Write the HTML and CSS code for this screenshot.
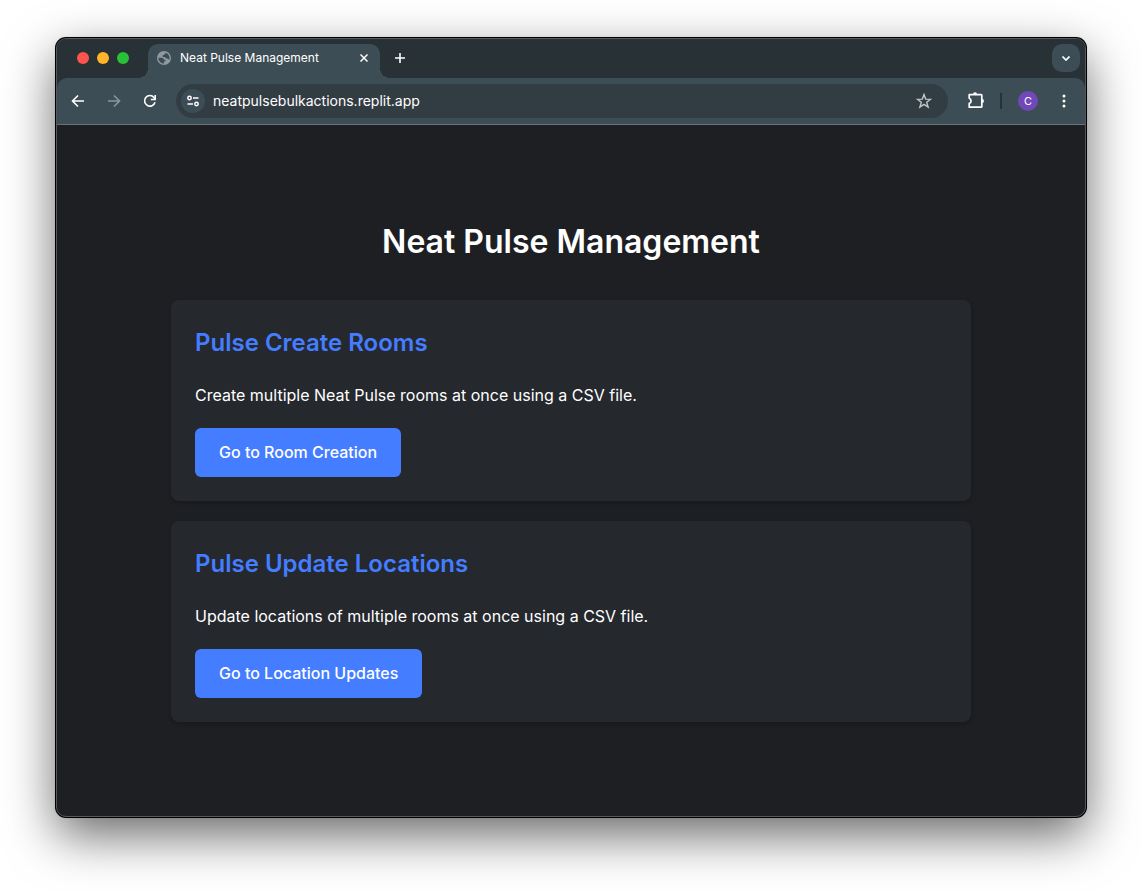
FILE: index.html
```html
<!DOCTYPE html>
<html lang="en">
<head>
<meta charset="utf-8">
<meta name="viewport" content="width=device-width, initial-scale=1">
<title>Neat Pulse Management</title>
<link rel="stylesheet" href="styles.css">
</head>
<body>
<div class="window">
  <header class="chrome">
    <div class="tab-strip">
      <div class="lights">
        <button class="light light-close" type="button" aria-label="Close window"></button>
        <button class="light light-min" type="button" aria-label="Minimize window"></button>
        <button class="light light-max" type="button" aria-label="Zoom window"></button>
      </div>
      <div class="tab">
        <svg class="globe" viewBox="0 0 14 14" width="14" height="14" aria-hidden="true"><circle cx="7" cy="7" r="7" fill="#9298a0"/><path d="M8.600 1.700C11 2.300 12.600 4.400 12.600 7c0 .6-.1 1.100-.3 1.600-.9-.2-1.100-1.200-2-1.200H9.200c-.7 0-.8-1.400-1.500-1.400H5.600V4.800c0-.5.5-.7 1-.7.600 0 .6-1.200 1.200-1.200.6 0 .8-.5.8-1.200z" fill="#3d4d55"/><path d="M1.500 6.800h3.200c1.300 0 2.200.8 2.200 2h1.500v1.700H6.900v2.100C3.800 12.500 1.300 9.900 1.500 6.800z" fill="#3d4d55"/></svg>
        <span class="tab-title">Neat Pulse Management</span>
        <button class="icon-button tab-close" type="button" aria-label="Close tab">
          <svg viewBox="0 0 8 8" width="8" height="8"><path d="M.5.5l7 7m0-7l-7 7" stroke="currentColor" stroke-width="1.500"/></svg>
        </button>
      </div>
      <button class="icon-button new-tab" type="button" aria-label="New tab">
        <svg viewBox="0 0 10 10" width="10" height="10"><path d="M5 0v10M0 5h10" stroke="currentColor" stroke-width="1.600"/></svg>
      </button>
      <button class="icon-button tab-search" type="button" aria-label="Search tabs">
        <svg viewBox="0 0 8 5" width="8" height="5"><path d="M.5.500L4 4 7.500.500" fill="none" stroke="currentColor" stroke-width="1.700"/></svg>
      </button>
    </div>
    <div class="toolbar">
      <nav class="history">
        <button class="icon-button" type="button" aria-label="Back">
          <svg viewBox="0 0 16 16" width="16" height="16"><path d="M14 8H3M8 2.500L2.500 8 8 13.500" fill="none" stroke="currentColor" stroke-width="1.600"/></svg>
        </button>
        <button class="icon-button forward" type="button" aria-label="Forward">
          <svg viewBox="0 0 16 16" width="16" height="16"><path d="M2 8h11M8 2.500L13.500 8 8 13.500" fill="none" stroke="currentColor" stroke-width="1.600"/></svg>
        </button>
        <button class="icon-button" type="button" aria-label="Reload">
          <svg viewBox="0 0 16 16" width="16" height="16"><path d="M13 9.200A5.300 5.300 0 1 1 12 4.500L13 6" fill="none" stroke="currentColor" stroke-width="1.600"/><path d="M13.200 2v4.500H8.800" fill="none" stroke="currentColor" stroke-width="1.600"/></svg>
        </button>
      </nav>
      <div class="omnibox">
        <button class="icon-button site-info" type="button" aria-label="View site information">
          <svg viewBox="0 0 14 12" width="14" height="12" fill="none" stroke="currentColor" stroke-width="1.500"><circle cx="3.500" cy="3" r="1.700"/><path d="M7 3h5.500M1.500 9H7"/><circle cx="10.500" cy="9" r="1.700"/></svg>
        </button>
        <input class="url" type="text" value="neatpulsebulkactions.replit.app" aria-label="Address" spellcheck="false">
        <button class="icon-button star" type="button" aria-label="Bookmark this page">
          <svg viewBox="0 0 16 16" width="16" height="16"><path d="M8 1.500l1.700 4.600 4.900.2-3.900 3 1.400 4.700L8 11.300 3.900 14l1.400-4.700-3.900-3 4.900-.2z" fill="none" stroke="currentColor" stroke-width="1.400"/></svg>
        </button>
      </div>
      <div class="actions">
        <button class="icon-button" type="button" aria-label="Extensions">
          <svg viewBox="0 0 18 18" width="18" height="18"><path d="M3.200 2.700h11.900q.7 0 .7.700v11.100q0 .7-.7.700H3.200v-3.600c2.500-1.200 2.500-4.200 0-5.300z" fill="none" stroke="currentColor" stroke-width="1.700" stroke-linejoin="round"/><path d="M7 2.300a2 2 0 0 1 4 0zM16 6.900a2 2 0 0 1 0 4z" fill="currentColor"/></svg>
        </button>
        <span class="divider"></span>
        <button class="avatar" type="button" aria-label="Profile C">C</button>
        <button class="icon-button" type="button" aria-label="Menu">
          <svg viewBox="0 0 4 14" width="4" height="14" fill="currentColor"><circle cx="2" cy="2" r="1.500"/><circle cx="2" cy="7" r="1.500"/><circle cx="2" cy="12" r="1.500"/></svg>
        </button>
      </div>
    </div>
  </header>
  <main class="page">
    <div class="container">
      <h1 class="title">Neat Pulse Management</h1>
      <section class="card">
        <h2 class="card-title">Pulse Create Rooms</h2>
        <p class="card-text">Create multiple Neat Pulse rooms at once using a CSV file.</p>
        <a class="button" href="#create">Go to Room Creation</a>
      </section>
      <section class="card">
        <h2 class="card-title">Pulse Update Locations</h2>
        <p class="card-text">Update locations of multiple rooms at once using a CSV file.</p>
        <a class="button" href="#update">Go to Location Updates</a>
      </section>
    </div>
  </main>
</div>
</body>
</html>
```
FILE: styles.css
```css
* {
  box-sizing: border-box;
}

body {
  margin: 0;
  min-height: 100vh;
  padding: 38px 56px 74px;
  display: flex;
  background: #fff;
  color: #fff;
  font-family: Inter, "Liberation Sans", sans-serif;
  font-size: 16px;
}

.window {
  flex: 1;
  min-width: 0;
  display: flex;
  flex-direction: column;
  border: 1px solid #55585c;
  border-radius: 10px;
  overflow: hidden;
  background: #1e1f23;
  box-shadow: 0 0 0 1px #000, 0 18px 50px rgba(0, 0, 0, 0.6), 0 0 3px rgba(0, 0, 0, 0.2);
}

button {
  border: 0;
  padding: 0;
  background: none;
  color: inherit;
  font-family: inherit;
}

.chrome {
  background: #283136;
}

.tab-strip {
  height: 39px;
  padding: 5px 5px 0 20px;
  display: flex;
}

.lights {
  display: flex;
  gap: 8px;
  padding-top: 8px;
  margin-right: 19px;
}

.light {
  width: 12px;
  height: 12px;
  border-radius: 50%;
}

.light-close { background: #ff544d; }
.light-min { background: #ffb429; }
.light-max { background: #28c138; }

.tab {
  position: relative;
  width: 232px;
  height: 34px;
  padding: 0 10px 6px 9px;
  display: flex;
  align-items: center;
  border-radius: 10px 10px 0 0;
  background: #3d4d55;
}

.tab::before,
.tab::after {
  content: "";
  position: absolute;
  bottom: 0;
  width: 10px;
  height: 10px;
}

.tab::before {
  right: 100%;
  background: radial-gradient(circle at 0 0, transparent 10px, #3d4d55 10px);
}

.tab::after {
  left: 100%;
  background: radial-gradient(circle at 100% 0, transparent 10px, #3d4d55 10px);
}

.tab-title {
  flex: 1;
  margin-left: 9px;
  font-size: 12px;
  font-weight: 400;
  line-height: 16px;
  white-space: nowrap;
}

.icon-button {
  display: flex;
  align-items: center;
  justify-content: center;
  flex: none;
}

.tab-close {
  width: 12px;
  height: 16px;
}

.new-tab {
  width: 28px;
  height: 28px;
  margin-left: 6px;
}

.tab-search {
  width: 28px;
  height: 28px;
  margin-left: auto;
  border-radius: 10px;
  background: #3d4d55;
}

.toolbar {
  height: 47px;
  padding: 0 13px;
  display: flex;
  align-items: center;
  background: #3d4d55;
  border-bottom: 1px solid #65747b;
  border-radius: 10px 10px 0 0;
}

.history {
  display: flex;
  gap: 20px;
}

.forward {
  color: #8b969b;
}

.omnibox {
  flex: 1;
  min-width: 0;
  height: 34px;
  margin: 0 18px;
  padding: 0 16px 0 5px;
  display: flex;
  align-items: center;
  border-radius: 17px;
  background: #323d43;
}

.site-info {
  width: 24px;
  height: 24px;
  border-radius: 50%;
  background: #3d4d55;
}

.url {
  flex: 1;
  min-width: 0;
  margin: 0 8px;
  padding: 0;
  border: 0;
  outline: 0;
  background: none;
  color: #fff;
  font-family: inherit;
  font-size: 14px;
  line-height: 20px;
}

.star {
  color: #bfc5c8;
}

.actions {
  display: flex;
  align-items: center;
}

.divider {
  width: 2px;
  height: 16px;
  margin: 0 16px;
  background: #283136;
}

.avatar {
  width: 20px;
  height: 20px;
  margin-right: 24px;
  border-radius: 50%;
  background: #7248b9;
  font-size: 11px;
  line-height: 20px;
}

.actions .icon-button:last-child {
  margin-right: 6px;
}

.page {
  flex: 1;
  padding: 20px 20px 24px;
  display: flex;
  align-items: center;
  justify-content: center;
}

.container {
  width: 100%;
  max-width: 800px;
  display: flex;
  flex-direction: column;
  gap: 20px;
}

.title {
  margin: 0 0 12px;
  font-size: 32px;
  font-weight: 600;
  line-height: 52px;
  text-align: center;
}

.card {
  padding: 24px;
  display: flex;
  flex-direction: column;
  align-items: flex-start;
  gap: 20px;
  border-radius: 8px;
  background: #25282d;
  box-shadow: 0 2px 4px rgba(0, 0, 0, 0.2);
}

.card-title {
  margin: 0;
  color: #447dff;
  font-size: 24px;
  font-weight: 600;
  line-height: 38px;
}

.card-text {
  margin: 0;
  line-height: 26px;
}

.button {
  padding: 12px 24px;
  border-radius: 6px;
  background: #447dff;
  color: #fff;
  font-weight: 500;
  line-height: 25px;
  text-decoration: none;
}
```
